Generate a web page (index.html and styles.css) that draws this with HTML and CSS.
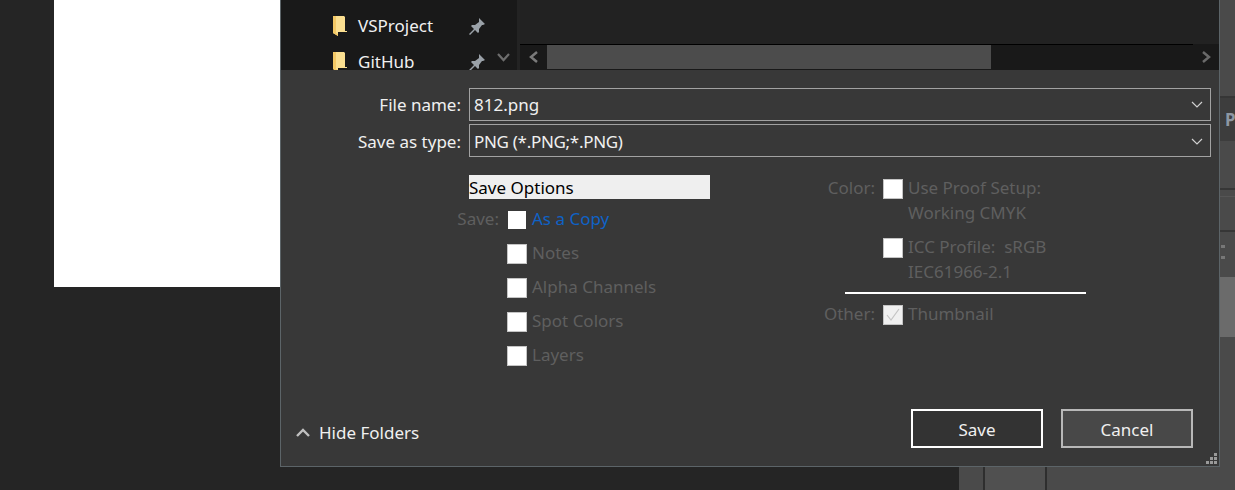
FILE: index.html
```html
<!DOCTYPE html>
<html lang="en">
<head>
    <meta charset="UTF-8">
    <title>Save As</title>
    <link rel="stylesheet" href="styles.css">
</head>
<body>

    <div class="backdrop">
        <div class="document"></div>
        <div class="panels">
            <div class="panel-top"></div>
            <div class="panel-tab">P</div>
            <div class="panel-mid"></div>
            <div class="panel-row"></div>
            <div class="panel-gap"></div>
            <div class="panel-handle">
                <span class="handle-mark"></span>
                <span class="handle-mark"></span>
            </div>
            <div class="panel-light"></div>
            <div class="panel-rest"></div>
            <div class="panel-bottom">
                <div class="slot"></div>
                <div class="slot slot-light"></div>
                <div class="slot slot-fill"></div>
            </div>
        </div>
    </div>

    <div class="dialog">
        <div class="browser">
            <div class="sidebar">
                <div class="folder-row">
                    <svg class="folder" width="14" height="22" viewBox="0 0 14 22">
                        <path d="M0 1h11l1 1v14h2v1H5v4l-5-3z" fill="#fbdf90"/>
                        <path d="M0 1h3v17l2 1v2l-5-3z" fill="#f3c865"/>
                    </svg>
                    <span class="folder-name">VSProject</span>
                    <svg class="pin" width="16" height="17" viewBox="0 0 16 17">
                        <path d="M10 0l6 6-2 1-1 0-3 4v3l-1 1-3-3-5 5-1-1 5-5-3-3 1-1h3l4-3 0-1z" fill="#9aa1a8"/>
                    </svg>
                </div>
                <div class="folder-row">
                    <svg class="folder" width="14" height="22" viewBox="0 0 14 22">
                        <path d="M0 1h11l1 1v14h2v1H5v4l-5-3z" fill="#fbdf90"/>
                        <path d="M0 1h3v17l2 1v2l-5-3z" fill="#f3c865"/>
                    </svg>
                    <span class="folder-name">GitHub</span>
                    <svg class="pin" width="16" height="17" viewBox="0 0 16 17">
                        <path d="M10 0l6 6-2 1-1 0-3 4v3l-1 1-3-3-5 5-1-1 5-5-3-3 1-1h3l4-3 0-1z" fill="#9aa1a8"/>
                    </svg>
                    <svg class="more" width="13" height="9" viewBox="0 0 13 9">
                        <path d="M1 1l5.500 6L12 1" fill="none" stroke="#6d6d6d" stroke-width="2.200"/>
                    </svg>
                </div>
            </div>
            <div class="files">
                <div class="file-list"></div>
                <div class="file-line"></div>
                <div class="scrollbar">
                    <div class="scroll-btn">
                        <svg width="10" height="12" viewBox="0 0 10 12"><path d="M8 1L2 6l6 5" fill="none" stroke="#7a7a7a" stroke-width="2.500"/></svg>
                    </div>
                    <div class="scroll-thumb"></div>
                    <div class="scroll-btn scroll-right">
                        <svg width="10" height="12" viewBox="0 0 10 12"><path d="M2 1l6 5-6 5" fill="none" stroke="#6a6a6a" stroke-width="2.500"/></svg>
                    </div>
                </div>
            </div>
        </div>

        <div class="form">
            <div class="field">
                <label class="field-label">File name:</label>
                <div class="combo">812.png
                    <svg class="combo-arrow" width="12" height="7" viewBox="0 0 12 7"><path d="M1 1l5 5 5-5" fill="none" stroke="#d0d0d0" stroke-width="1.200"/></svg>
                </div>
            </div>
            <div class="field field-type">
                <label class="field-label">Save as type:</label>
                <div class="combo">PNG (*.PNG;*.PNG)
                    <svg class="combo-arrow" width="12" height="7" viewBox="0 0 12 7"><path d="M1 1l5 5 5-5" fill="none" stroke="#d0d0d0" stroke-width="1.200"/></svg>
                </div>
            </div>

            <div class="options">
                <div class="options-left">
                    <div class="options-title">Save Options</div>
                    <div class="save-list">
                        <div class="opt">
                            <span class="opt-label">Save:</span>
                            <span class="check check-plain"></span>
                            <span class="opt-text link">As a Copy</span>
                        </div>
                        <div class="opt"><span class="opt-label"></span><span class="check"></span><span class="opt-text">Notes</span></div>
                        <div class="opt"><span class="opt-label"></span><span class="check"></span><span class="opt-text">Alpha Channels</span></div>
                        <div class="opt"><span class="opt-label"></span><span class="check"></span><span class="opt-text">Spot Colors</span></div>
                        <div class="opt"><span class="opt-label"></span><span class="check"></span><span class="opt-text">Layers</span></div>
                    </div>
                </div>
                <div class="options-right">
                    <div class="color-opt">
                        <span class="opt-label">Color:</span>
                        <span class="check"></span>
                        <span class="two-line">Use Proof Setup:<br>Working CMYK</span>
                    </div>
                    <div class="color-opt icc-opt">
                        <span class="opt-label"></span>
                        <span class="check"></span>
                        <span class="two-line">ICC Profile:&nbsp; sRGB<br>IEC61966-2.1</span>
                    </div>
                    <div class="separator"></div>
                    <div class="color-opt">
                        <span class="opt-label">Other:</span>
                        <span class="check check-on">
                            <svg width="16" height="14" viewBox="0 0 16 14"><path d="M2 7l4 5 8-11" fill="none" stroke="#c4c4c4" stroke-width="1.200"/></svg>
                        </span>
                        <span class="single-line">Thumbnail</span>
                    </div>
                </div>
            </div>

            <div class="footer">
                <div class="hide-folders">
                    <svg width="14" height="9" viewBox="0 0 14 9"><path d="M1 8l6-6 6 6" fill="none" stroke="#c0c0c0" stroke-width="2.400"/></svg>
                    <span>Hide Folders</span>
                </div>
                <div class="buttons">
                    <button class="btn btn-default" type="button">Save</button>
                    <button class="btn" type="button">Cancel</button>
                </div>
            </div>
            <svg class="grip" width="11" height="11" viewBox="0 0 11 11">
                <path d="M8 0h3v3H8zM4 4h3v3H4zM8 4h3v3H8zM0 8h3v3H0zM4 8h3v3H4zM8 8h3v3H8z" fill="#9a9a9a"/>
            </svg>
        </div>
    </div>

</body>
</html>
```

FILE: styles.css
```css
/* Photoshop save dialog over the dark workspace */
body {
    font-family: "Noto Sans", "Open Sans", sans-serif;
    font-size: 17px;
    background-color: #252525;
    margin: 0;
    width: 1235px;
    height: 490px;
    overflow: hidden;
}

.backdrop {
    display: flex;
    justify-content: space-between;
    height: 490px;
}

.document {
    width: 226px;
    height: 287px;
    margin-left: 54px;
    background-color: #ffffff;
}

.panels {
    width: 276px;
    display: flex;
    flex-direction: column;
    align-items: stretch;
    background-color: #4a4a4a;
}

.panel-top {
    height: 96px;
    border-bottom: 2px solid #363636;
}

.panel-tab {
    height: 43px;
    padding-left: 266px;
    line-height: 43px;
    font-weight: 700;
    color: #8d97a3;
    background-color: #3d3d3d;
}

.panel-mid {
    height: 47px;
    border-bottom: 2px solid #363636;
}

.panel-row {
    height: 6px;
    border-bottom: 1px solid #555555;
}

.panel-gap {
    height: 33px;
    border-bottom: 2px solid #363636;
}

.panel-handle {
    height: 45px;
    padding: 13px 0 0 262px;
    box-sizing: border-box;
}

.handle-mark {
    display: block;
    width: 4px;
    height: 3px;
    margin-bottom: 8px;
    background-color: #777777;
}

.panel-light {
    height: 60px;
    background-color: #6b6b6b;
}

.panel-rest {
    flex: 1;
}

.panel-bottom {
    display: flex;
    height: 23px;
}

.slot {
    width: 24px;
}

.slot-light {
    width: 60px;
    background-color: #505050;
    border-left: 2px solid #2e2e2e;
    border-right: 2px solid #2e2e2e;
}

.slot-fill {
    flex: 1;
}

.dialog {
    position: absolute;
    left: 280px;
    top: 0;
    width: 938px;
    height: 466px;
    display: flex;
    flex-direction: column;
    border-left: 1px solid #5c6468;
    border-right: 1px solid #5c6468;
    border-bottom: 1px solid #5c6468;
    background-color: #383838;
}

/* the form sits on top and hides whatever runs past the folder list */
.browser {
    display: flex;
    height: 70px;
    background-color: #191919;
}

.sidebar {
    width: 236px;
    height: 62px;
    padding-top: 8px;
    border-right: 3px solid #232323;
}

.folder-row {
    display: flex;
    align-items: center;
    height: 36px;
    position: relative;
    color: #f0f0f0;
}

.folder {
    margin-left: 52px;
}

.folder-name {
    margin-left: 11px;
    margin-bottom: 2px;
    width: 111px;
    line-height: 1;
}

.more {
    position: absolute;
    left: 216px;
    top: 9px;
}

.files {
    flex: 1;
    display: flex;
    flex-direction: column;
}

.file-list {
    height: 44px;
    background-color: #222222;
}

.file-line {
    width: 673px;
    height: 1px;
    background-color: #000000;
}

.scrollbar {
    flex: 1;
    display: flex;
    align-items: stretch;
    padding-bottom: 1px;
}

.scroll-btn {
    width: 27px;
    display: flex;
    align-items: center;
    justify-content: center;
}

.scroll-thumb {
    width: 444px;
    background-color: #4c4c4c;
}

.scroll-right {
    margin-left: auto;
}

.form {
    flex: 1;
    position: relative;
    padding: 18px 8px 0 0;
    color: #f0f0f0;
    background-color: #383838;
}

.field {
    display: flex;
    height: 33px;
    margin-bottom: 3px;
}

.field-label {
    width: 180px;
    margin-right: 8px;
    text-align: right;
    line-height: 33px;
}

.combo {
    flex: 1;
    display: flex;
    align-items: center;
    justify-content: space-between;
    padding: 0 7px 0 4px;
    border: 1px solid #a2a2a2;
}

.field-type .field-label {
    line-height: 35px;
}

.field-type .combo {
    letter-spacing: -0.3px;
    padding-top: 1px;
    box-sizing: border-box;
}

.options {
    display: flex;
    margin-top: 18px;
    color: #5f5f5f;
}

.options-left {
    width: 429px;
    padding-left: 188px;
    box-sizing: border-box;
}

.options-title {
    width: 241px;
    height: 24px;
    line-height: 25px;
    background-color: #efefef;
    color: #000000;
}

.save-list {
    margin-top: 11px;
    margin-left: -50px;
}

.opt {
    display: flex;
    align-items: center;
    height: 20px;
    margin-bottom: 14px;
}

.opt .opt-label {
    width: 88px;
    padding-right: 8px;
    padding-bottom: 4px;
    box-sizing: border-box;
    text-align: right;
}

.opt-text {
    margin-left: 5px;
    padding-bottom: 4px;
}

.check {
    width: 20px;
    height: 20px;
    flex: none;
    box-sizing: border-box;
    display: flex;
    align-items: center;
    justify-content: center;
    background-color: #ffffff;
    border: 1px solid #c4c4c4;
}

.check-plain {
    width: 18px;
    height: 18px;
    margin-left: 1px;
    margin-right: 1px;
    border: none;
}

.check-on {
    background-color: #f0f0f0;
}

.link {
    color: #0f62c6;
}

.options-right {
    margin-left: 135px;
    padding-top: 4px;
    width: 241px;
}

.color-opt {
    display: flex;
    align-items: flex-start;
    margin-left: -22px;
}

.color-opt .opt-label {
    width: 60px;
    padding-right: 8px;
    margin-top: -1px;
    box-sizing: border-box;
    text-align: right;
    line-height: 20px;
}

.color-opt .check {
    margin-right: 5px;
}

.two-line {
    line-height: 25px;
    margin-top: -4px;
}

.single-line {
    line-height: 20px;
    margin-top: -1px;
}

.icc-opt {
    margin-top: 13px;
}

.separator {
    height: 2px;
    background-color: #ffffff;
    margin-top: 8px;
    margin-bottom: 11px;
}

.footer {
    position: absolute;
    left: 15px;
    right: 26px;
    bottom: 18px;
    display: flex;
    align-items: center;
    justify-content: space-between;
}

.hide-folders {
    display: flex;
    align-items: center;
    gap: 9px;
    margin-top: 8px;
}

.buttons {
    display: flex;
    gap: 18px;
}

.btn {
    width: 132px;
    height: 39px;
    padding-top: 3px;
    font-family: inherit;
    font-size: 17px;
    color: #f0f0f0;
    background-color: #484848;
    border: 2px solid #b8b8b8;
}

.btn-default {
    background-color: #333333;
    border-color: #ffffff;
}

.grip {
    position: absolute;
    right: 2px;
    bottom: 2px;
}
```
